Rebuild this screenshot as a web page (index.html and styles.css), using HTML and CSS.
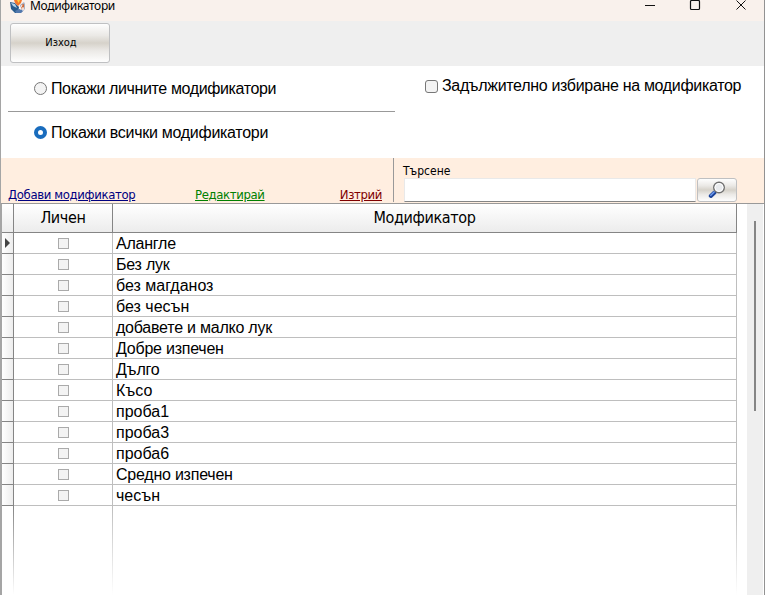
FILE: index.html
```
<!DOCTYPE html>
<html lang="bg">
<head>
<meta charset="utf-8">
<title>Модификатори</title>
<link rel="stylesheet" href="styles.css">
</head>
<body>
<div class="window">
  <header class="titlebar">
    <svg class="logo" width="16" height="14" viewBox="0 0 16 14">
      <path d="M0 2l5 1 4 4-1 6H5L1 9z" fill="#285b8c"/><path d="M1 3l4 1 2 4-4-2z" fill="#b4d3e8"/>
      <path d="M10 5l4-3 1 2v5l-4 4H6l4-3z" fill="#a9b2c4"/><path d="M11 5l3-1v6l-3 2z" fill="#cf6a3b"/>
      <path d="M5 11l4-2 5 1-3 3H6z" fill="#5278ad"/><path d="M4 0h8l-1 3-3 3-3-3z" fill="#f4772b"/><path d="M7 0h3l-1.500 3z" fill="#ffd23c"/>
      <path d="M12 5l-2 4h4m-1-2v4" fill="none" stroke="#fff"/>
    </svg>
    <span class="caption">Модификатори</span>
    <svg class="controls" width="104" height="12" viewBox="0 0 104 12" fill="none" stroke="#111">
      <path d="M0 5.500h10"/><rect x="45.500" y=".5" width="9" height="9" rx="1" stroke-width="1.200"/><path d="M91.500 .5l9 9m0-9l-9 9"/>
    </svg>
  </header>
  <div class="toolbar"><button class="btn exit"><span>Изход</span></button></div>
  <section class="options">
    <div class="radios">
      <label class="opt first"><i class="radio"></i><span class="r1">Покажи личните модификатори</span></label>
      <label class="opt second"><i class="radio on"></i><span class="r2">Покажи всички модификатори</span></label>
    </div>
    <label class="opt required"><i class="check"></i><span class="r3">Задължително избиране на модификатор</span></label>
  </section>
  <section class="actions">
    <nav class="links"><a class="add">Добави модификатор</a><a class="edit">Редактирай</a><a class="del">Изтрий</a></nav>
    <div class="search">
      <span class="search-label">Търсене</span>
      <div class="search-row"><div class="field"></div>
        <button class="btn find"><svg width="18" height="18" viewBox="0 0 18 18"><path d="M2.800 15l3.700-3.500" stroke="#1c4399" stroke-width="4" stroke-linecap="round"/><path d="M2.800 14.200l3.500-3.400" stroke="#6f9cf0" stroke-width="1.500" stroke-linecap="round"/><circle cx="11" cy="6.500" r="5.300" fill="#e9ebee" stroke="#707070" stroke-width="1.400"/><circle cx="11" cy="6.500" r="4" fill="none" stroke="#fff"/></svg></button>
      </div>
    </div>
  </section>
  <main class="data">
    <div class="grid">
      <div class="row head"><b></b><div class="c1"><span class="h1">Личен</span></div><div class="c2"><span class="h2">Модификатор</span></div></div>
      <div class="row"><b class="current"></b><div class="c1"><i></i></div><div class="c2 tight">Алангле</div></div>
      <div class="row"><b></b><div class="c1"><i></i></div><div class="c2 tight">Без лук</div></div>
      <div class="row"><b></b><div class="c1"><i></i></div><div class="c2">без магданоз</div></div>
      <div class="row"><b></b><div class="c1"><i></i></div><div class="c2">без чесън</div></div>
      <div class="row"><b></b><div class="c1"><i></i></div><div class="c2 tight">добавете и малко лук</div></div>
      <div class="row"><b></b><div class="c1"><i></i></div><div class="c2 tight">Добре изпечен</div></div>
      <div class="row"><b></b><div class="c1"><i></i></div><div class="c2 tight">Дълго</div></div>
      <div class="row"><b></b><div class="c1"><i></i></div><div class="c2">Късо</div></div>
      <div class="row"><b></b><div class="c1"><i></i></div><div class="c2">проба1</div></div>
      <div class="row"><b></b><div class="c1"><i></i></div><div class="c2">проба3</div></div>
      <div class="row"><b></b><div class="c1"><i></i></div><div class="c2">проба6</div></div>
      <div class="row"><b></b><div class="c1"><i></i></div><div class="c2 tight">Средно изпечен</div></div>
      <div class="row"><b></b><div class="c1"><i></i></div><div class="c2">чесън</div></div>
      <div class="row rest"><b></b><div class="c1"></div><div class="c2"></div></div>
    </div>
    <div class="track"><div class="thumb"></div></div>
  </main>
</div>
</body>
</html>
```

FILE: styles.css
```
* { box-sizing: border-box; }
body { margin: 0; height: 595px; overflow: hidden; color: #000; background: #fff; font: 16px/20px "Liberation Sans", sans-serif; }
.window { height: 595px; display: flex; flex-direction: column; border-left: 1px solid #a5a5a5; border-right: 1px solid #929292; }
.titlebar { height: 21px; flex: none; display: flex; background: #f9f1ec; padding-left: 9px; }
.logo { flex: none; }
.caption { font: 12px/14px "Noto Sans", sans-serif; letter-spacing: -.33px; margin: -1px 0 0 4px; white-space: nowrap; }
.controls { margin: 0 15px 0 auto; }
.toolbar { height: 45px; flex: none; background: #efefef; padding: 2px 9px; }
.btn { display: flex; align-items: center; justify-content: center; padding: 0; border: 1px solid #bfc0c2; border-radius: 3px; background: linear-gradient(#fefefe, #ebe9e6 30%, #d6d2ca 50%, #ebe9e6 70%, #fefefe); }
.exit { width: 100px; height: 40px; padding-left: 2px; font: 11px/14px "DejaVu Sans Condensed", "DejaVu Sans", sans-serif; color: #000; }
.options { height: 92px; flex: none; display: flex; }
.radios { width: 387px; margin-left: 7px; }
.opt { display: flex; align-items: center; white-space: nowrap; }
.first { height: 46px; padding-left: 26px; border-bottom: 1px solid #999; }
.second { height: 41px; padding-left: 26px; }
.r1 { letter-spacing: -.38px; }
.r2 { letter-spacing: -.28px; }
.r3 { letter-spacing: -.32px; }
.radio { width: 13px; height: 13px; margin-right: 4px; border: 1px solid #777; border-radius: 50%; background: #f3f3f3; }
.on { border: 4px solid #196cbd; background: #fff; }
.required { height: 20px; margin: 10px 0 0 30px; }
.check { width: 13px; height: 13px; margin-right: 4px; border: 1px solid #777; border-radius: 3px; background: #f3f3f3; }
.actions { height: 45px; flex: none; display: flex; background: #ffeee0; }
.links { width: 393px; height: 44px; padding: 29px 11px 0 7px; display: grid; grid-template-columns: 187px 1fr auto; border-right: 1px solid #999; font: 13px/16px "DejaVu Sans Condensed", "DejaVu Sans", sans-serif; letter-spacing: -.36px; }
.links a { text-decoration: underline; white-space: nowrap; }
.add { color: #000080; }
.edit { color: #008000; }
.del { color: #800000; }
.search { flex: 1; padding: 5px 0 0 10px; }
.search-label { display: block; font: 12px/15px "DejaVu Sans Condensed", "DejaVu Sans", sans-serif; margin-left: -1px; padding-top: 1px; height: 15px; }
.search-row { display: flex; }
.field { width: 292px; height: 24px; background: #fff; border: 1px solid #e9e9e9; border-bottom-color: #858585; }
.find { width: 40px; height: 24px; margin-left: 1px; }
.data { flex: 1; min-height: 0; display: flex; border-top: 1px solid #999; }
.grid { width: 736px; display: flex; flex-direction: column; border-left: 1px solid #a5a5a5; }
.row { height: 21px; flex: none; display: grid; grid-template-columns: 12px 99px 624px; }
.row > * { border: 0 solid #bebebe; border-width: 0 1px 1px 0; }
.row > b { border-color: #858585; background: linear-gradient(90deg, #fff, #ededed); }
.row .c1 { display: flex; align-items: center; justify-content: center; }
.row i { width: 11px; height: 11px; border: 1px solid #aaa; background: #f3f3f3; }
.c2 { padding: 1px 0 0 3px; line-height: 19px; white-space: nowrap; }
.tight { letter-spacing: -.23px; }
.row.head { height: 29px; }
.head > *, .row.head > b { border-color: #858585; background: linear-gradient(#fff, #ececec); }
.head .c2 { display: flex; align-items: center; justify-content: center; padding: 0; }
.head span { font: 16px/20px "DejaVu Sans Condensed", "DejaVu Sans", sans-serif; letter-spacing: -.36px; }
.current { display: flex; align-items: center; }
.current::before { content: ""; margin-left: 3px; border: 5px solid transparent; border-left: 5px solid #444; border-right: 0; }
.row.rest { flex: 1; height: auto; }
.row.rest > * { background: linear-gradient(#bebebe, #fff) right / 1px 100% no-repeat; border: 0; }
.row.rest > b { background-image: linear-gradient(#858585, #fff); }
.track { width: 16px; margin-left: 10px; background: #efefef; padding: 17px 0 0 7px; }
.thumb { width: 2px; height: 190px; background: #858585; }
```
